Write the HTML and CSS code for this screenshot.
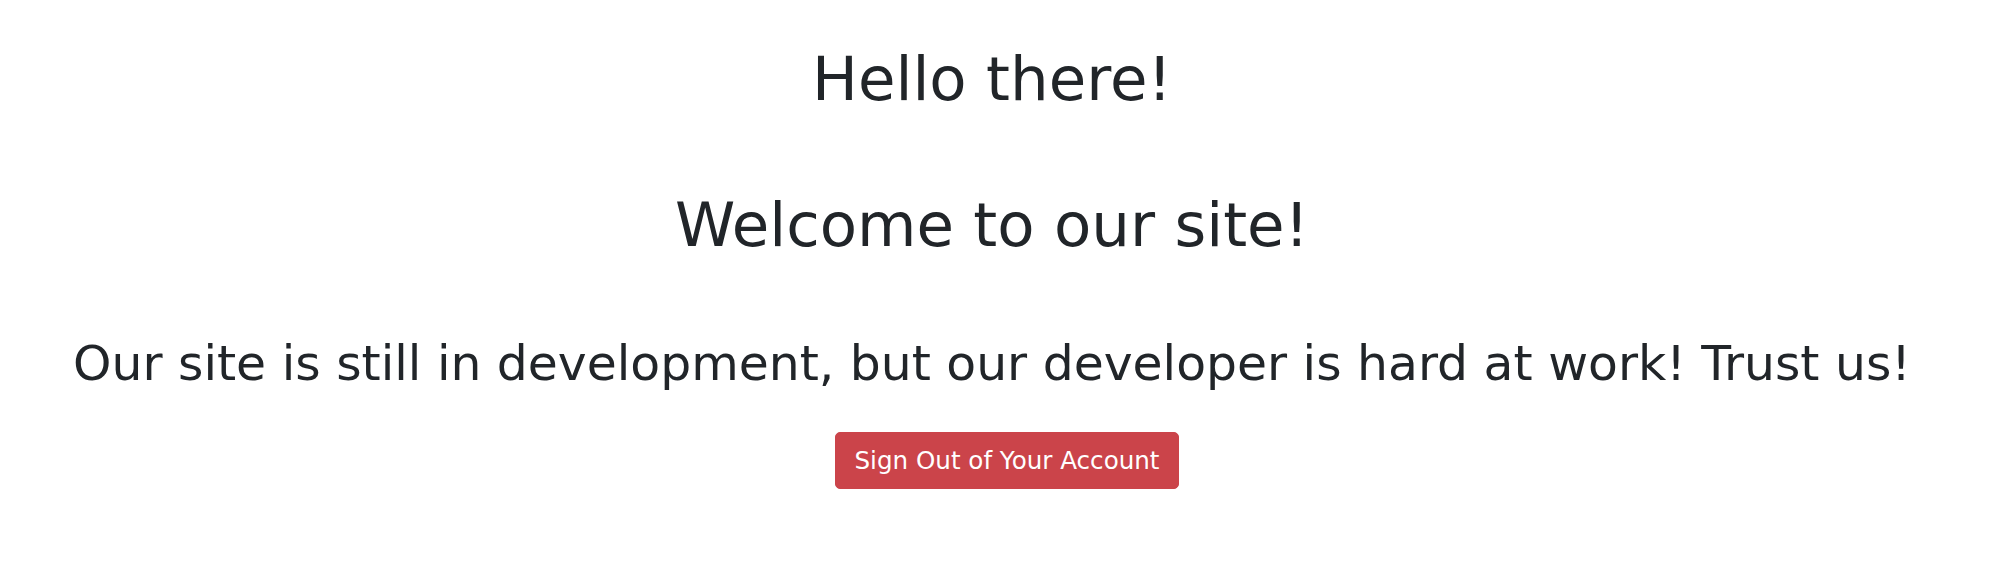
FILE: index.html
```html
<!DOCTYPE html>
<html lang="en">
<head>
<meta charset="utf-8">
<title>Welcome</title>
<link rel="stylesheet" href="styles.css">
</head>
<body>
<main class="welcome">
  <h1 class="title">Hello there!</h1>
  <h1 class="title title-second">Welcome to our site!</h1>
  <h2 class="subtitle">Our site is still in development, but our developer is hard at work! Trust us!</h2>
  <button class="btn-danger" type="button">Sign Out of Your Account</button>
</main>
</body>
</html>
```
FILE: styles.css
```css
html, body {
  margin: 0;
  padding: 0;
  background: #ffffff;
}
body {
  font-family: "DejaVu Sans", sans-serif;
  color: #212529;
}
.welcome {
  display: flex;
  flex-direction: column;
  align-items: center;
  text-align: center;
  padding: 41.5px 16px 0 0;
}
.title {
  font-size: 61px;
  font-weight: 500;
  line-height: 1.2;
  margin: 0;
}
.title-second {
  margin-top: 73.5px;
}
.subtitle {
  font-size: 48.8px;
  font-weight: 500;
  line-height: 1.2;
  margin: 73.5px 0 0;
}
.btn-danger {
  margin: 38.5px 0 0 30px;
  font-family: "DejaVu Sans", sans-serif;
  font-size: 24.6px;
  line-height: 37.3px;
  padding: 9px 18px;
  color: #ffffff;
  background: #cb444a;
  border: 1px solid #cb444a;
  border-radius: 5px;
  cursor: pointer;
}
```
